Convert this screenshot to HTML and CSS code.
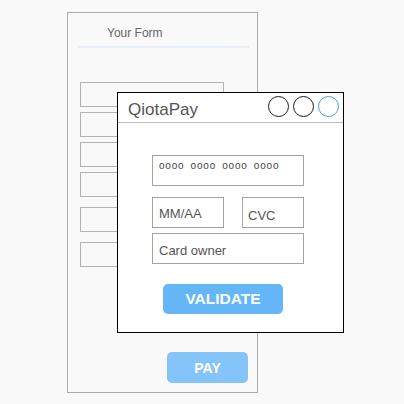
FILE: index.html
```html
<!DOCTYPE html>
<html>
<head>
<meta charset="utf-8">
<link rel="stylesheet" href="styles.css">
</head>
<body>
<div class="stage">
  <div class="form">
    <div class="form-title">Your Form</div>
    <div class="fields">
      <div class="field"></div>
      <div class="field"></div>
      <div class="field"></div>
      <div class="field"></div>
      <div class="field gap"></div>
      <div class="field gap"></div>
    </div>
    <div class="pay">PAY</div>
  </div>

  <div class="dialog">
    <div class="dialog-head">
      <div class="dialog-title">QiotaPay</div>
      <div class="dots">
        <span class="dot"></span>
        <span class="dot"></span>
        <span class="dot blue"></span>
      </div>
    </div>
    <div class="dialog-body">
      <div class="input card-number">oooo oooo oooo oooo</div>
      <div class="row">
        <div class="input expiry">MM/AA</div>
        <div class="input cvc">CVC</div>
      </div>
      <div class="input owner">Card owner</div>
      <div class="validate">VALIDATE</div>
    </div>
  </div>
</div>
</body>
</html>
```

FILE: styles.css
```css
html, body {
  margin: 0;
  padding: 0;
}

body {
  width: 404px;
  height: 404px;
  background: #f9f9f9;
  font-family: "Liberation Sans", Arial, sans-serif;
  overflow: hidden;
}

.stage {
  position: relative;
  padding: 12px 0 0 67px;
}

.form {
  box-sizing: border-box;
  width: 191px;
  height: 381px;
  border: 1px solid #ababab;
  background: #f9f9f9;
  display: flex;
  flex-direction: column;
}

.form-title {
  margin: 0 8px 0 10px;
  padding: 13px 0 6px 29px;
  font-size: 12px;
  line-height: 14px;
  color: #666;
  border-bottom: 2px solid #e8eef6;
}

.fields {
  display: flex;
  flex-direction: column;
  gap: 5px;
  margin: 34px 0 0 12px;
}

.field {
  box-sizing: border-box;
  width: 144px;
  height: 25px;
  border: 1px solid #b2b2b2;
  background: #f9f9f9;
}

.field.gap {
  margin-top: 5px;
}

.pay {
  margin: auto 9px 9px auto;
  width: 81px;
  height: 31px;
  border-radius: 5px;
  background: #85c4f9;
  color: #fff;
  font-weight: bold;
  font-size: 14px;
  display: flex;
  align-items: center;
  justify-content: center;
}

.dialog {
  position: absolute;
  left: 117px;
  top: 92px;
  box-sizing: border-box;
  width: 227px;
  height: 241px;
  border: 1px solid #000;
  background: #fff;
}

.dialog-head {
  box-sizing: border-box;
  height: 30px;
  border-bottom: 1px solid #bcbcbc;
  display: flex;
  align-items: flex-start;
  justify-content: space-between;
}

.dialog-title {
  margin: 7px 0 0 10px;
  font-size: 17px;
  line-height: 20px;
  color: #555;
}

.dots {
  display: flex;
  gap: 4px;
  margin: 3px 4px 0 0;
}

.dot {
  box-sizing: border-box;
  width: 21px;
  height: 21px;
  border-radius: 50%;
  border: 1px solid #1a1a1a;
}

.dot.blue {
  border-color: #3d9fe0;
}

.dialog-body {
  display: flex;
  flex-direction: column;
  padding: 32px 0 0 34px;
}

.input {
  box-sizing: border-box;
  height: 31px;
  border: 1px solid #a3a3a3;
  color: #555;
  font-size: 13px;
  line-height: 15px;
  padding-left: 6px;
}

.card-number {
  width: 152px;
  font-size: 10px;
  line-height: 12px;
  padding-top: 4px;
  letter-spacing: 0.8px;
  word-spacing: 2.6px;
  color: #444;
}

.row {
  display: flex;
  justify-content: space-between;
  width: 152px;
  margin: 11px 0 5px;
}

.expiry {
  width: 72px;
  padding-top: 8px;
}

.cvc {
  width: 62px;
  padding-top: 10px;
  padding-left: 5px;
}

.owner {
  width: 152px;
  padding-top: 9px;
}

.validate {
  margin: 20px 0 0 11px;
  width: 120px;
  height: 30px;
  border-radius: 5px;
  background: #65b6f7;
  color: #fff;
  font-weight: bold;
  font-size: 15.5px;
  display: flex;
  align-items: center;
  justify-content: center;
}
```
